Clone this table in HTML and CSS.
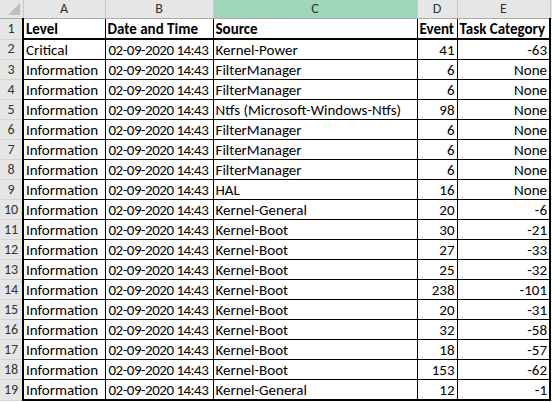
FILE: index.html
```html
<!DOCTYPE html>
<html>
<head>
<meta charset="utf-8">
<link rel="stylesheet" href="styles.css">
</head>
<body>
<table class="sheet">
  <colgroup>
    <col class="c-rh"><col class="c-a"><col class="c-b"><col class="c-c"><col class="c-d"><col class="c-e"><col class="c-f">
  </colgroup>
  <thead>
    <tr class="colhdr">
      <th class="corner"><span class="tri"></span></th>
      <th>A</th><th>B</th><th class="sel">C</th><th>D</th><th>E</th><th class="rest"></th>
    </tr>
  </thead>
  <tbody>
    <tr class="title">
      <th class="rh">1</th>
      <td class="first">Level</td><td>Date and Time</td><td>Source</td><td>Event</td><td class="last">Task Category</td><td class="rest"></td>
    </tr>
    <tr><th class="rh">2</th><td class="first">Critical</td><td class="dt">02-09-2020 14:43</td><td>Kernel-Power</td><td class="num">41</td><td class="num last">-63</td><td class="rest"></td></tr>
    <tr><th class="rh">3</th><td class="first">Information</td><td class="dt">02-09-2020 14:43</td><td>FilterManager</td><td class="num">6</td><td class="num last">None</td><td class="rest"></td></tr>
    <tr><th class="rh">4</th><td class="first">Information</td><td class="dt">02-09-2020 14:43</td><td>FilterManager</td><td class="num">6</td><td class="num last">None</td><td class="rest"></td></tr>
    <tr><th class="rh">5</th><td class="first">Information</td><td class="dt">02-09-2020 14:43</td><td>Ntfs (Microsoft-Windows-Ntfs)</td><td class="num">98</td><td class="num last">None</td><td class="rest"></td></tr>
    <tr><th class="rh">6</th><td class="first">Information</td><td class="dt">02-09-2020 14:43</td><td>FilterManager</td><td class="num">6</td><td class="num last">None</td><td class="rest"></td></tr>
    <tr><th class="rh">7</th><td class="first">Information</td><td class="dt">02-09-2020 14:43</td><td>FilterManager</td><td class="num">6</td><td class="num last">None</td><td class="rest"></td></tr>
    <tr><th class="rh">8</th><td class="first">Information</td><td class="dt">02-09-2020 14:43</td><td>FilterManager</td><td class="num">6</td><td class="num last">None</td><td class="rest"></td></tr>
    <tr><th class="rh">9</th><td class="first">Information</td><td class="dt">02-09-2020 14:43</td><td>HAL</td><td class="num">16</td><td class="num last">None</td><td class="rest"></td></tr>
    <tr><th class="rh">10</th><td class="first">Information</td><td class="dt">02-09-2020 14:43</td><td>Kernel-General</td><td class="num">20</td><td class="num last">-6</td><td class="rest"></td></tr>
    <tr><th class="rh">11</th><td class="first">Information</td><td class="dt">02-09-2020 14:43</td><td>Kernel-Boot</td><td class="num">30</td><td class="num last">-21</td><td class="rest"></td></tr>
    <tr><th class="rh">12</th><td class="first">Information</td><td class="dt">02-09-2020 14:43</td><td>Kernel-Boot</td><td class="num">27</td><td class="num last">-33</td><td class="rest"></td></tr>
    <tr><th class="rh">13</th><td class="first">Information</td><td class="dt">02-09-2020 14:43</td><td>Kernel-Boot</td><td class="num">25</td><td class="num last">-32</td><td class="rest"></td></tr>
    <tr><th class="rh">14</th><td class="first">Information</td><td class="dt">02-09-2020 14:43</td><td>Kernel-Boot</td><td class="num">238</td><td class="num last">-101</td><td class="rest"></td></tr>
    <tr><th class="rh">15</th><td class="first">Information</td><td class="dt">02-09-2020 14:43</td><td>Kernel-Boot</td><td class="num">20</td><td class="num last">-31</td><td class="rest"></td></tr>
    <tr><th class="rh">16</th><td class="first">Information</td><td class="dt">02-09-2020 14:43</td><td>Kernel-Boot</td><td class="num">32</td><td class="num last">-58</td><td class="rest"></td></tr>
    <tr><th class="rh">17</th><td class="first">Information</td><td class="dt">02-09-2020 14:43</td><td>Kernel-Boot</td><td class="num">18</td><td class="num last">-57</td><td class="rest"></td></tr>
    <tr><th class="rh">18</th><td class="first">Information</td><td class="dt">02-09-2020 14:43</td><td>Kernel-Boot</td><td class="num">153</td><td class="num last">-62</td><td class="rest"></td></tr>
    <tr class="lastrow"><th class="rh">19</th><td class="first">Information</td><td class="dt">02-09-2020 14:43</td><td>Kernel-General</td><td class="num">12</td><td class="num last">-1</td><td class="rest"></td></tr>
  </tbody>
</table>
</body>
</html>
```
FILE: styles.css
```css
html, body {
  margin: 0;
  padding: 0;
  background: #ffffff;
}
body {
  font-family: "Carlito", "Lato", "Liberation Sans", sans-serif;
  font-size: 15px;
  color: #000;
  overflow: hidden;
}
.sheet {
  border-collapse: collapse;
  table-layout: fixed;
  width: 560px;
}
.c-rh { width: 23px; }
.c-a { width: 82px; }
.c-b { width: 108px; }
.c-c { width: 204px; }
.c-d { width: 40px; }
.c-e { width: 93px; }
.c-f { width: 10px; }

.sheet th, .sheet td {
  padding: 0 2px;
  white-space: nowrap;
  overflow: hidden;
  line-height: 18px;
  text-align: left;
  font-weight: normal;
}
.colhdr th {
  height: 18px;
  padding: 0;
  background: #e6e6e6;
  color: #333;
  text-align: center;
  font-weight: normal;
  border-right: 1px solid #c8c8c8;
  border-bottom: 1px solid #ababab;
  font-size: 14px;
}
.colhdr th.sel {
  background: #a0d6b8;
  color: #1e3a2a;
}
.colhdr th.corner {
  position: relative;
  background: #e6e6e6;
}
.tri {
  position: absolute;
  right: 3px;
  bottom: 3px;
  width: 0;
  height: 0;
  border-left: 12px solid transparent;
  border-bottom: 12px solid #bfbfbf;
}
.rh {
  background: #e6e6e6;
  color: #333 !important;
  text-align: center !important;
  padding: 0 !important;
  font-size: 14px;
  border-bottom: 1px solid #d4d4d4;
  border-right: 1px solid #ababab;
}
tbody td {
  height: 19px;
  border: 1px solid #000;
}
tbody td.rest {
  border: none;
  border-left: 2px solid #000;
  border-bottom: 1px solid #dadada;
}
.title td {
  font-weight: bold;
  border-bottom: 2px solid #000;
  border-top: none;
}
.title td.rest {
  border-bottom: 1px solid #dadada;
}
td.first {
  border-left: 2px solid #000;
}
td.last {
  border-right: 2px solid #000;
}
.lastrow td {
  border-bottom: 2px solid #000;
}
.lastrow td.rest {
  border-bottom: 1px solid #dadada;
}
td.dt {
  padding-left: 3px;
  padding-right: 0;
  letter-spacing: -0.5px;
}
td.num {
  text-align: right;
}
```
